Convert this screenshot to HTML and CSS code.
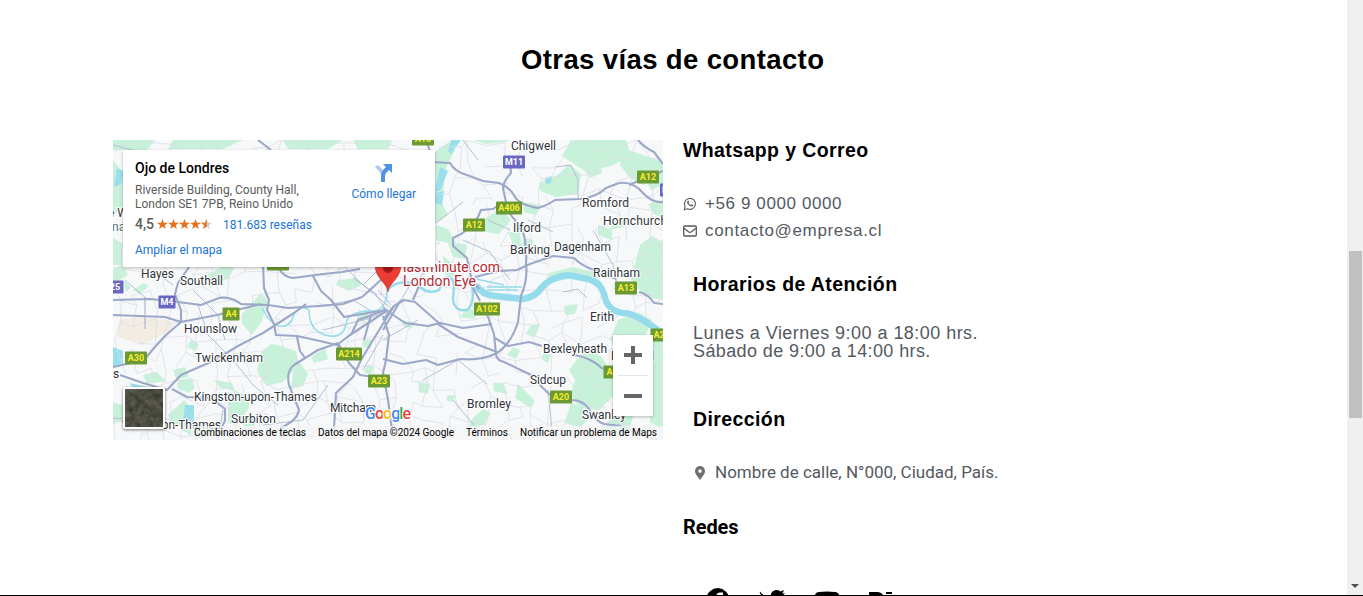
FILE: index.html
```html
<!DOCTYPE html>
<html lang="es">
<head>
<meta charset="utf-8">
<title>Contacto</title>
<link rel="stylesheet" href="styles.css">
</head>
<body>
<div class="window">
<main class="page">
  <h1 class="title"><span>Otras vías de contacto</span></h1>
  <div class="columns">
    <section class="map">
      <svg class="map-canvas" viewBox="0 0 550 300" width="550" height="300">
        <defs>
          <filter id="ground" x="0" y="0" width="100%" height="100%" color-interpolation-filters="sRGB">
            <feTurbulence type="fractalNoise" baseFrequency=".16" numOctaves="4" seed="8"/>
            <feColorMatrix values=".24 .12 0 0 .12  .2 .14 0 0 .13  .2 .08 0 0 .12  0 0 0 0 1"/>
          </filter>
        </defs>
        <rect width="550" height="300" fill="#f7f8fa"/>
        <g class="parks">
          <path d="M0 0h42l-8 10H0zM60 0h70l-20 9H55zM170 0h60l-15 9h-40zM240 0h40l-5 9h-30zM0 20l10 12v35l-10 8zM0 98l9 5v22H0z"/>
          <path d="M322 12l14-10 6 8-9 18-4 35 6 12-13 8zM323 85l12 4 8 14 11 2-2 14-12-2-5-14-12-3zM330 115l12 12 0 10-10-2z"/>
          <path d="M458 0h55l5 16-20 10 -25 6-24-16zM426 43l20-9 10-10 12 10-3 20-22 3-16-6zM370 80l18-12 10 12-12 14-14-2zM360 0l12 4 20-2 5-2zM470 28l14-3 5 8-12 5z"/>
          <path d="M510 8l40 14v15l-20 8-14-8-9-12zM531 38l19-5v12l-12 5zM410 62l20 3-8 10-11-3zM395 92l12 0 2 18-8-3zM535 64l15-4v18l-9-4z"/>
          <path d="M527 105l12-9 11 6v58l-18-3-14-18zM500 82l18-2-10 8-12 2zM485 85l14 5 0 10-14-5zM436 133l24-6 20 5 10 12-30-6-28 6zM412 98l9 2-3 7-9-2z"/>
          <path d="M0 128l10-3 5 10-15 9zM20 150l11-7 5 3-10 8zM94 135l18-10 9 3-5 10-20 10zM148 153l7 8-6 20-10 14-10-11 0-10z"/>
          <path d="M165 205l18 6 3 14-16 17-16 4-10-14 4-20 10-8zM65 240l14-2 3 10-6 5-12-5zM55 275l16-15 8 9-7 18-14-3zM101 240l18 3 3 8-16-4zM122 250l14 8 0 10-12 17-9-2 0-20z"/>
          <path d="M78 200l8 4-3 7-9-4zM225 140l18-2 7 6-14 7-13-6zM244 173l10-3 2 10-12 2zM254 225l7 2-4 8-6-3zM185 220l10 14-5 12-12 3 2-16zM198 217l14-9 3 11-14 4zM250 200l11-1-4 10-8-3z"/>
          <path d="M305 242l12 2-2 10-9-2zM380 243l10 0 5 11-14-3zM405 244l17 17-4 7-16-10zM418 185l9-1-5 13-9-3zM451 166l14-2-3 10-10 1zM505 180l20-8 14 8-6 15-20 2-10 12-6-10z"/>
          <path d="M472 210l16 6 12 20 0 20-14 14-20-2-8-14 4-14-6-10zM470 232l20-8 10 8-4 30-25-3-12-12z"/>
          <path d="M458 262l22 12-13 14-15-5zM500 270l20 6-5 20-24-4zM540 195l10 0v95l-13-8zM360 278l10-9 8 4-7 12-17 3zM335 255l8 1-4 6-6-2zM290 180l12 3-4 6-8-3zM355 168l10 4-4 7-15-2zM430 212l8 3-3 8-6-3zM400 207l7 3-4 9-9-4z"/>
          <path d="M92 18l13-8 8 4-4 9zM130 274l15 4-4 8-10 1zM60 230l12-3 4 10-13 2zM10 140l8 7-5 5zM30 235l14-3 9 9-19 3zM70 290l24-6 9 9-20 6zM0 262l12 4 0 14-12 4z"/>
        </g>
        <path fill="#f2ece2" d="M6 180l18-3 30 3 7 5-4 6-20 10-8 4-24-8z"/>
        <g class="lakes"><path d="M4 28l10 5-6 11-7 3zM0 207l10 4 0 14-10 3zM338 0l10 0-10 14-3-3zM327 27l8 4-8 20-5 0zM322 53l9-2-2 14-7-2zM16 243l20 4 10 10-18 0zM72 265l9 0 0 21-11-4zM432 38l7-2-1 7-5 1z"/></g>
        <g id="streets" class="streets"></g>
        <g class="secondary">
          <path d="M40 130L60 145M80 150L105 175L112 200M12 140L35 160M85 165L95 195L120 220L140 245L165 265M110 270L105 300M150 285L190 280L215 245M0 278L25 280M230 125L250 145L280 170M240 138L262 153L275 173M205 167L240 160L260 172M210 190L250 180L280 170M250 145L265 130M278 165L265 150M270 195L250 230M270 200L305 180M350 100L377 112L397 140M323 83L350 62M350 0L365 20M310 240L345 220L374 244M375 80L397 90M415 80L440 92M442 27L458 25L465 40L465 60M450 152L465 149L474 158"/>
          <path d="M0 5L20 10L35 30M435 250L440 300M505 285L545 300M340 260L365 290M285 165L297 145L315 130M480 90L500 125L505 150"/>
        </g>
        <g class="river">
          <path class="thames" d="M363 145Q369 155 382 156L410 159Q423 157 429 147Q438 137 455 135L475 139Q488 143 491 154Q494 171 510 173Q523 173 550 194"/>
          <path class="upstream" d="M149 168Q157 184 166 186Q178 188 181 174Q188 164 196 170Q196 190 212 195Q230 200 233 184Q234 173 253 171Q274 174 274 150"/>
          <path d="M274 150Q288 137 306 146Q315 155 326 150L330 139Q341 134 341 147L340 160Q342 172 354 170Q362 164 359 145"/>
          <path class="dock" d="M374 147H409M374 150H405M363 139L391 145"/>
        </g>
        <g class="roads">
          <path d="M319 22L337 23Q342 32 354 35L370 41L386 43Q398 48 402 57Q407 65 425 68Q435 65 442 60L467 59Q484 57 493 48L506 43Q520 41 530 53Q539 63 550 62"/>
          <path d="M397 22L398 33Q390 42 390 48L393 62Q394 72 402 80L411 95Q414 110 413 124Q415 140 408 156L405 182Q398 204 384 213Q368 221 347 219L325 225L313 220L290 224L270 219"/>
          <path d="M516 45L535 37L550 31M525 0Q532 8 541 12L550 24M390 62L380 69L368 70L365 77Q357 91 340 98L340 106L354 118L358 137L366 149"/>
          <path d="M362 137L386 131L404 130L417 124L440 116L461 118Q470 127 482 130L503 139M526 152Q535 154 541 163L550 164"/>
          <path d="M270 168L292 183L315 186L327 183L350 188L379 184M325 184L345 197L363 204L384 212M360 148L367 161M374 174L381 194L383 214Q383 220 391 222L418 235M382 198L395 206L416 202L429 206M461 215Q477 217 490 229M426 244L437 255M458 260Q470 260 476 269Q482 281 491 284L508 286"/>
          <path d="M270 180L281 166L291 160L302 162L327 184M270 176L276 195L273 220L270 233L275 260L279 290M300 160L306 146M270 190L288 160"/>
          <path d="M0 160L38 159L65 162L88 165L106 158Q118 156 128 164L155 165L175 168L205 166L230 164L249 157L257 150L273 135"/>
          <path d="M0 175L52 177L68 182L104 175L128 169L148 164M68 182L52 196L41 208L31 220L0 227M7 235L30 243L54 250L68 235L100 221L125 206L150 193L181 173L193 164"/>
          <path d="M150 125L151 148L156 160L154 170L161 184L163 195L184 196L207 201L224 205L237 195L275 170M76 127L65 143L62 154L68 170L68 183M165 127Q170 137 180 138L210 134L229 132L247 129M200 136L208 151L218 160L231 177L273 170"/>
          <path d="M184 197L187 211L192 218M225 203L205 210L181 225Q173 231 176 245L186 270Q184 281 167 288M225 203L236 223L247 235L260 237M59 249L74 257L98 258L112 269L112 281L104 295M281 166L260 200L248 220L240 237L223 253L221 289M225 205L228 217M238 195L245 180L270 171M251 200L258 175M145 0L158 10M313 0L320 20"/>
        </g>
        <path d="M32 157V189" stroke="#a2abc5"/>
        <g class="places">
          <text x="398" y="10" textLength="45">Chigwell</text><text x="469" y="67" textLength="47">Romford</text><text x="490" y="85" textLength="64">Hornchurch</text><text x="400" y="92" textLength="28">Ilford</text><text x="397" y="114" textLength="40">Barking</text><text x="441" y="111" textLength="57">Dagenham</text><text x="480" y="137" textLength="47">Rainham</text><text x="28" y="138" textLength="33">Hayes</text><text x="67" y="145" textLength="43">Southall</text><text x="71" y="193" textLength="53">Hounslow</text><text x="82" y="222" textLength="68">Twickenham</text><text x="81" y="261" textLength="123">Kingston-upon-Thames</text><text x="118" y="283" textLength="45">Surbiton</text><text x="9" y="289" textLength="99">Walton-on-Thames</text><text x="217" y="272" textLength="46">Mitcham</text><text x="354" y="268" textLength="44">Bromley</text><text x="417" y="244" textLength="36">Sidcup</text><text x="430" y="213" textLength="64">Bexleyheath</text><text x="477" y="181" textLength="24">Erith</text><text x="469" y="279" textLength="44">Swanley</text><text x="0" y="238">s</text><text x="498" y="220" textLength="43">Dartford</text><text x="-5" y="77">e W</text><text x="-1" y="91" fill="#507b73">na</text>
        </g>
        <g id="shields" class="shields"></g>
        <g class="attraction"><text x="290" y="132" textLength="97">lastminute.com</text><text x="290" y="146" textLength="73">London Eye</text></g>
        <path d="M275 152C274 143 262 138 262 125A13 13 0 0 1 288 125C288 138 276 143 275 152Z" fill="#ea3d34" stroke="#c53630" stroke-width=".6"/><circle cx="275" cy="128" r="5" fill="#a51917"/>
        <g class="wordmark"><text x="252" y="279" textLength="46"><tspan fill="#4285f4">G</tspan><tspan fill="#ea4335">o</tspan><tspan fill="#fbbc05">o</tspan><tspan fill="#4285f4">g</tspan><tspan fill="#34a853">l</tspan><tspan fill="#ea4335">e</tspan></text></g>
        <rect x="78" y="286" width="472" height="14" fill="#f5f5f5" opacity=".72"/>
        <g class="credits"><text x="81" y="296" textLength="112">Combinaciones de teclas</text><text x="205" y="296" textLength="136">Datos del mapa ©2024 Google</text><text x="353" y="296" textLength="42">Términos</text><text x="407" y="296" textLength="137">Notificar un problema de Maps</text></g>
      </svg>
      <div class="place-card">
        <div>
          <h2>Ojo de Londres</h2>
          <p class="address">Riverside Building, County Hall,<br>London SE1 7PB, Reino Unido</p>
          <p class="rating"><b>4,5</b>
            <svg width="55" height="11" viewBox="0 0 55 11"><defs><path id="star" d="M5.5 0L6.9 3.8H11L7.7 6.2L8.9 10L5.5 7.7L2.1 10L3.3 6.2L0 3.8H4.1Z"/><clipPath id="half"><path d="M0 0H5.7V11H0z"/></clipPath></defs><g fill="#e7711b"><use href="#star"/><use href="#star" x="11"/><use href="#star" x="22"/><use href="#star" x="33"/></g><use href="#star" x="44" fill="#d0cbc8"/><g transform="translate(44)"><use href="#star" fill="#e7711b" clip-path="url(#half)"/></g></svg>
            <a>181.683 reseñas</a></p>
          <a class="enlarge">Ampliar el mapa</a>
        </div>
        <div class="directions">
          <svg width="20" height="20" viewBox="0 0 20 20"><path d="M1 4L4 2L9 7Q11 9 11 12H7Q7 10 5 8Z" fill="#a9c9f4"/><path d="M7 19V12Q7 9 10 6L12 4L9 1H18V10L15 7L13 9Q11 11 11 13V19Z" fill="#5291e4"/></svg>
          <a>Cómo llegar</a>
        </div>
      </div>
      <svg class="satellite" width="42" height="42"><rect width="42" height="42" rx="2" fill="white"/><rect x="2" y="2" width="38" height="38" filter="url(#ground)"/></svg>
      <div class="zoom"><span class="plus"></span><hr><span class="minus"></span></div>
    </section>
    <section class="details">
      <h3 class="whatsapp-title"><span>Whatsapp y Correo</span></h3>
      <p class="contact phone">
        <svg width="14" height="14" viewBox="0 0 14 14" fill="none" stroke="#54595f"><path d="M2 9.3A5.5 5.5 0 1 1 4.5 11.8L1.3 12.7Z" stroke-width="1.1"/><path d="M4.6 4L5.4 3.6L6.2 5.1L5.5 6Q6.1 7.4 7.8 8.2L8.7 7.3L10.2 8L10 9Q8.7 10.1 6.5 8.7Q3.9 7 4.1 5Z" fill="#54595f" stroke="none"/></svg><span>+56 9 0000 0000</span></p>
      <p class="contact email">
        <svg width="14" height="12" viewBox="0 0 14 12" fill="none" stroke="#54595f" stroke-width="1.3"><rect x=".7" y="1" width="12.6" height="10" rx="1"/><path d="M1 3.2L5.5 6.8Q7 7.9 8.5 6.8L13 3.2"/></svg><span>contacto@empresa.cl</span></p>
      <h3 class="hours-title"><span>Horarios de Atención</span></h3>
      <p class="hours"><span class="weekdays">Lunes a Viernes 9:00 a 18:00 hrs.</span><br><span class="saturday">Sábado de 9:00 a 14:00 hrs.</span></p>
      <h3 class="address-title"><span>Dirección</span></h3>
      <p class="contact street">
        <svg width="14" height="14" viewBox="0 0 14 14"><path fill="#6e6f70" fill-rule="evenodd" d="M7 0A5 5 0 0 0 2 5C2 8 4 9.5 7 14C10 9.5 12 8 12 5A5 5 0 0 0 7 0ZM7 3.3A1.8 1.8 0 1 1 7 6.9A1.8 1.8 0 1 1 7 3.3Z"/></svg><span>Nombre de calle, N°000, Ciudad, País.</span></p>
      <h3 class="social-title">Redes</h3>
      <div class="social">
        <svg width="24" height="24" viewBox="0 0 24 24"><path d="M12 0A12 12 0 0 0 10 23.8V15H7V12H10V9C10 6 12 4.5 14 4.5H17V7H15Q13.5 7 13.5 9V12H17L16.5 15H13.5V23.8A12 12 0 0 0 12 0Z"/></svg>
        <svg width="26" height="24" viewBox="0 0 26 24"><path d="M1 3.5Q5 9 12 9C11 4 15 2 18 2Q20 2 21.5 3.5L25 2Q24 5 23 5.5L26 5L23.5 8C23 17 16 23 8 23Q3 23 0 20Q5 21 8 18Q4 17 3 14H5Q1 12 1 8H3Q0 5 1 3.5Z"/></svg>
        <svg width="26" height="24" viewBox="0 0 26 24"><path fill-rule="evenodd" d="M5 4Q13 3 21 4Q26 4 26 13Q26 22 21 22Q13 23 5 22Q0 22 0 13Q0 4 5 4ZM10 8V18L18 13Z"/></svg>
        <svg width="26" height="24" viewBox="0 0 26 24"><path fill-rule="evenodd" d="M0 4H9Q14 5 14 8Q14 11 11 12Q15 14 15 18Q15 22 9 22H0ZM4 7V11H8Q12 7 8 7ZM4 14V19H8Q13 14 8 14ZM17 4H23V6H17ZM16 15Q16 7 21 7Q26 8 26 16H19Q21 20 25 18Q23 22 21 22Q16 21 16 15Z"/></svg>
      </div>
    </section>
  </div>
</main>
<aside class="scrollbar"><div class="thumb"></div><i class="arrow"></i></aside>
</div>
<script src="map.js"></script>
</body>
</html>
```
FILE: styles.css
```css
* { box-sizing: border-box; }
body { margin: 0; overflow: hidden; background: white; font-family: "Liberation Sans", sans-serif; }
h1, h2, h3, p { margin: 0; }
.window { height: 596px; display: flex; border-bottom: 1px solid #000; overflow: hidden; }
.page { width: 1347px; height: 595px; overflow: hidden; }
.title { margin: 42px 0 0 521px; font: 700 27.5px/36px "Liberation Sans", sans-serif; color: #000; white-space: nowrap; letter-spacing: .38px; }
.columns { display: flex; gap: 20px; padding: 62px 0 0 113px; }
.map { width: 550px; height: 300px; position: relative; overflow: hidden; flex-shrink: 0; font-family: Roboto, sans-serif; }
.map-canvas { display: block; }
.parks { fill: #c8f1da; }
.lakes { fill: #9bdfed; }
.river { fill: none; stroke: #94dceb; stroke-width: 2.5; }
.river .upstream { stroke-width: 1.5; }
.river .thames { stroke-width: 6.5; }
.river .dock { stroke-width: 1.5; }
.roads { fill: none; stroke: #9ca8c8; stroke-width: 2.1; stroke-linejoin: round; }
.secondary { fill: none; stroke: #b5bfd4; stroke-width: 1; }
.streets { fill: none; stroke: #dcdee6; stroke-width: .8; }
.places { font-size: 12px; fill: #2e3238; stroke: #fff; stroke-width: 2px; paint-order: stroke; }
.attraction { font-size: 14px; fill: #b42630; stroke: #fff; stroke-width: 2px; paint-order: stroke; }
.shields { font-size: 9px; font-weight: 700; text-anchor: middle; }
.wordmark { font: 500 16px Roboto, sans-serif; stroke: #fff; stroke-width: 2px; paint-order: stroke; }
.credits { font-size: 10px; fill: #000; }
.place-card { position: absolute; left: 10px; top: 10px; width: 312px; height: 117px; padding: 9px 19px 0 12px; background: #fff; box-shadow: 0 1px 3px #0004; display: flex; justify-content: space-between; font-size: 12px; color: #5b5b5b; }
.place-card h2 { font-size: 14px; font-weight: 500; line-height: 18px; color: #000; }
.place-card a { color: #1a73d8; }
.address { margin-top: 6px; line-height: 14px; }
.rating { display: flex; align-items: center; height: 16px; margin-top: 5px; }
.rating b { font-size: 14px; font-weight: 500; margin-right: 3px; }
.rating a { margin-left: 11px; padding-top: 1px; }
.enlarge { display: block; margin-top: 11px; line-height: 15px; }
.directions { display: flex; flex-direction: column; align-items: center; padding-top: 4px; gap: 4px; }
.satellite { position: absolute; left: 10px; bottom: 11px; border-radius: 2px; box-shadow: 0 1px 3px #0008; }
.zoom { position: absolute; right: 10px; top: 195px; width: 40px; height: 81px; background: #fff; box-shadow: 0 1px 3px #0004; display: grid; grid-template-rows: 40px 1px 40px; justify-items: center; align-items: center; }
.zoom hr { width: 30px; height: 1px; border: 0; margin: 0; background: #e6e6e6; }
.plus, .minus { width: 18px; height: 4px; background: #666; }
.plus { height: 18px; clip-path: polygon(7px 0,11px 0,11px 7px,18px 7px,18px 11px,11px 11px,11px 18px,7px 18px,7px 11px,0 11px,0 7px,7px 7px); }
.details { width: 370px; color: #54595f; white-space: nowrap; }
.details h3 { color: #000; font: 700 19.5px/20px "Liberation Sans", sans-serif; letter-spacing: .4px; }
.contact { display: flex; align-items: center; gap: 8px; height: 27px; font-size: 17px; }
.phone { margin-top: 30px; }
.phone span { letter-spacing: .6px; }
.email span { letter-spacing: .66px; }
.details .hours-title { margin: 30px 0 0 10px; }
.hours { margin: 30px 0 0 10px; font-size: 18px; line-height: 18px; }
.weekdays { letter-spacing: .46px; }
.saturday { letter-spacing: .39px; }
.details .address-title { margin: 49px 0 0 10px; }
.street { margin: 30px 0 0 10px; font: 17px/18px Roboto, sans-serif; height: 27px; }
.street span { padding-bottom: 2px; }
.details .social-title { margin-top: 31px; font: 700 20px/20px Roboto, sans-serif; letter-spacing: -.1px; }
.social { display: flex; gap: 29px; padding: 51px 0 0 23px; }
.scrollbar { width: 16px; height: 595px; background: #f0f0f0; display: flex; flex-direction: column; align-items: center; justify-content: space-between; padding-top: 251px; }
.thumb { width: 13px; height: 167px; background: #c1c1c1; }
.arrow { border: 4px solid transparent; border-top-color: #505050; border-bottom: 0; margin-bottom: 7px; }
```
FILE: map.js
```js
const ns = "http://www.w3.org/2000/svg";
function add(parent, tag, attributes, text = "") {
  const node = document.createElementNS(ns, tag);
  for (const [key, value] of Object.entries(attributes)) node.setAttribute(key, value);
  node.textContent = text;
  parent.append(node);
}
let seed = 83;
const random = () => (seed = seed * 16807 % 2147483647) / 2147483647;
const columns = 36, rows = 21;
const nodes = Array.from({length: rows}, (_, y) => Array.from({length: columns}, (_, x) => [x * 16 + random() * 13, y * 16 + random() * 13]));
let path = "";
nodes.forEach((row, y) => row.forEach((p, x) => {
  if (x + 1 < columns && random() < .65) path += `M${p}L${row[x + 1]}`;
  if (y + 1 < rows && random() < .65) path += `M${p}L${nodes[y + 1][x]}`;
}));
add(document.getElementById("streets"), "path", {d: path});
const shields = document.getElementById("shields");
[["M11",401,22],["A12",535,37],["A406",396,68],["A12",361,85],["A13",513,148],["A102",374,169],["A4",118,174],["M4",54,162],["A30",23,218],["A214",236,214],["A23",266,241],["A20",448,257],["A2",546,195],["A2",499,232],["25",2,147],["A10",310,-1],["A40",165,124],["M25",558,50]].forEach(([label,x,y]) => {
  const motorway = label[0] === "M" || label === "25";
  const width = label.length === 4 ? 26 : label.length === 3 ? 22 : 17;
  add(shields, "rect", {x: x - width/2, y: y - 6.5, width, height: 13, rx: 1, fill: motorway ? "#6868c4" : "#6b9934"});
  add(shields, "text", {x, y: y + 3.3, fill: motorway ? "#fff" : "#f5ed2e"}, label);
});
```
